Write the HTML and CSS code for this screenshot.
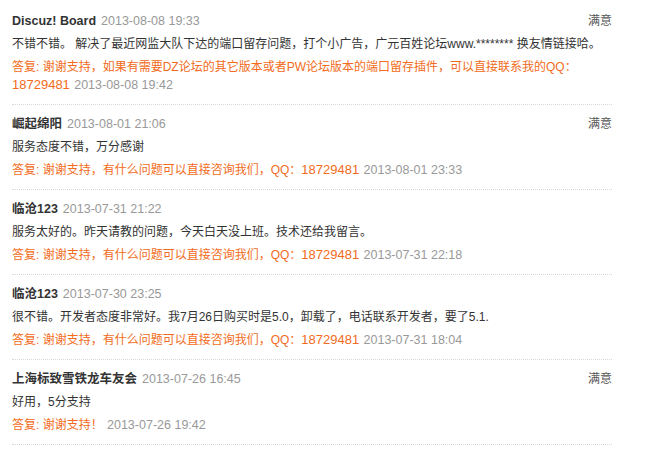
FILE: index.html
```html
<!DOCTYPE html>
<html lang="zh-CN">
<head>
  <meta charset="UTF-8">
  <title>评价列表</title>
  <link rel="stylesheet" href="styles.css">
</head>
<body>
  <div class="comments">
    <div class="comment">
      <div class="head">
        <span class="user">Discuz! Board</span>
        <span class="time">2013-08-08 19:33</span>
        <span class="rate">满意</span>
      </div>
      <div class="content">不错不错。 解决了最近网监大队下达的端口留存问题，打个小广告，广元百姓论坛www.******** 换友情链接哈。</div>
      <div class="reply">答复: 谢谢支持，如果有需要DZ论坛的其它版本或者PW论坛版本的端口留存插件，可以直接联系我的QQ：<span class="num">18729481</span> <span class="time">2013-08-08 19:42</span></div>
    </div>
    <div class="comment">
      <div class="head">
        <span class="user">崛起绵阳</span>
        <span class="time">2013-08-01 21:06</span>
        <span class="rate">满意</span>
      </div>
      <div class="content">服务态度不错，万分感谢</div>
      <div class="reply">答复: 谢谢支持，有什么问题可以直接咨询我们，QQ：<span class="num">18729481</span> <span class="time">2013-08-01 23:33</span></div>
    </div>
    <div class="comment">
      <div class="head">
        <span class="user">临沧123</span>
        <span class="time">2013-07-31 21:22</span>
      </div>
      <div class="content">服务太好的。昨天请教的问题，今天白天没上班。技术还给我留言。</div>
      <div class="reply">答复: 谢谢支持，有什么问题可以直接咨询我们，QQ：<span class="num">18729481</span> <span class="time">2013-07-31 22:18</span></div>
    </div>
    <div class="comment">
      <div class="head">
        <span class="user">临沧123</span>
        <span class="time">2013-07-30 23:25</span>
      </div>
      <div class="content">很不错。开发者态度非常好。我7月26日购买时是5.0，卸载了，电话联系开发者，要了5.1.</div>
      <div class="reply">答复: 谢谢支持，有什么问题可以直接咨询我们，QQ：<span class="num">18729481</span> <span class="time">2013-07-31 18:04</span></div>
    </div>
    <div class="comment">
      <div class="head">
        <span class="user">上海标致雪铁龙车友会</span>
        <span class="time">2013-07-26 16:45</span>
        <span class="rate">满意</span>
      </div>
      <div class="content">好用，5分支持</div>
      <div class="reply">答复: 谢谢支持！ <span class="time">2013-07-26 19:42</span></div>
    </div>
  </div>
</body>
</html>
```

FILE: styles.css
```css
body {
  margin: 0;
  font-family: "Liberation Sans", "Noto Sans CJK SC", sans-serif;
  font-size: 12px;
  color: #333;
  background-color: #fff;
}
.comments {
  width: 600px;
  margin-left: 12px;
  padding-top: 3px;
}
.comment {
  padding: 9px 0 10px;
  border-bottom: 1px dotted #d8d8d8;
}
.comment:first-child {
  padding-top: 8px;
}
.head {
  display: flex;
  align-items: baseline;
  gap: 5px;
  line-height: 20px;
}
.user {
  font-weight: bold;
  font-size: 12.5px;
  color: #333;
}
.time {
  color: #999;
  font-size: 12.5px;
}
.num {
  font-size: 13px;
}
.rate {
  margin-left: auto;
  color: #555;
}
.content {
  margin-top: 3px;
  line-height: 20px;
}
.reply {
  margin-top: 4px;
  line-height: 18px;
  color: #f26b21;
}
.reply .time {
  margin-left: 1px;
}
```
